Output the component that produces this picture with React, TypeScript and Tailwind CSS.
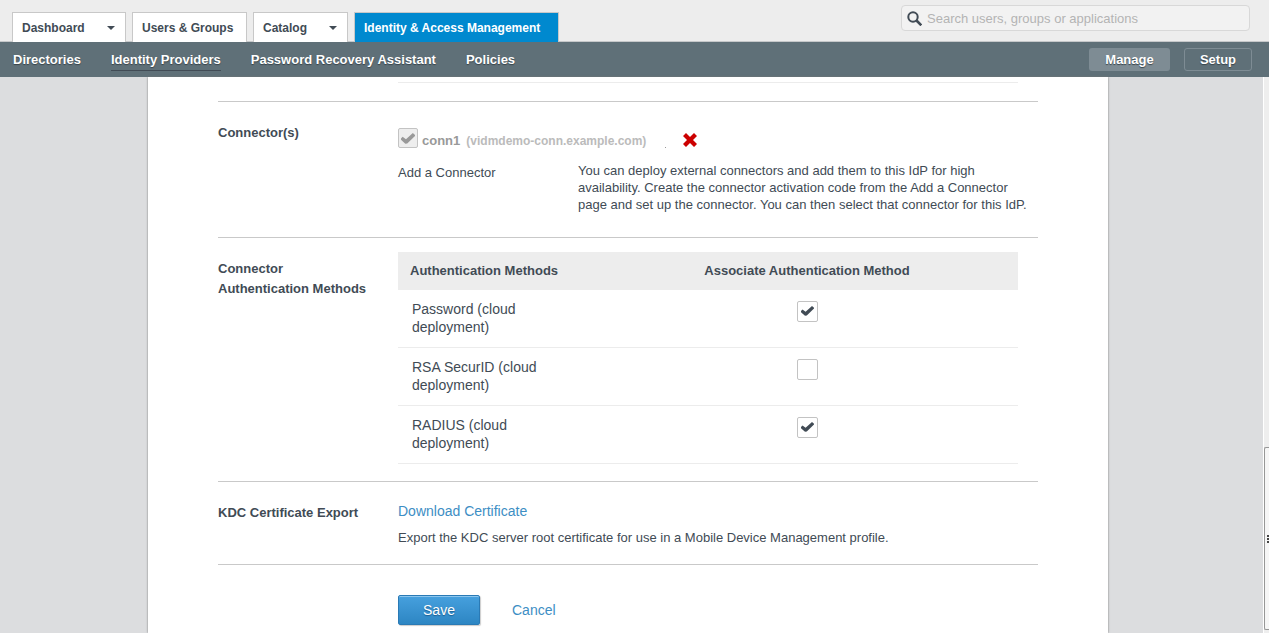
import React from "react";

type Tab = { label: string; menu?: boolean; active?: boolean; width: string };

const tabs: Tab[] = [
  { label: "Dashboard", menu: true, width: "w-[114px]" },
  { label: "Users & Groups", width: "w-[115px]" },
  { label: "Catalog", menu: true, width: "w-[95px]" },
  { label: "Identity & Access Management", active: true, width: "w-[205px]" },
];

const methods = [
  { id: "password", label: "Password (cloud deployment)", checked: true },
  { id: "securid", label: "RSA SecurID (cloud deployment)", checked: false },
  { id: "radius", label: "RADIUS (cloud deployment)", checked: true },
];

function CheckBox({ id, checked, disabled }: { id: string; checked: boolean; disabled?: boolean }) {
  return (
    <span className={`relative inline-block align-top ${disabled ? "size-5" : "size-[21px]"}`}>
      <input
        id={id}
        type="checkbox"
        defaultChecked={checked}
        disabled={disabled}
        className="peer block size-full appearance-none rounded-[2px] border border-[#c3c3c3] bg-white disabled:bg-[#eeeeee]"
      />
      <svg
        viewBox="0 0 13 10"
        className={
          disabled
            ? "pointer-events-none absolute top-[5px] left-[3px] hidden h-[11px] w-[14px] text-[#999999] peer-checked:block"
            : "pointer-events-none absolute top-[5px] left-1 hidden h-[10px] w-[13px] text-[#414b55] peer-checked:block"
        }
      >
        <path d="M0 5 1.5 3.4 4.6 5.7 11 0 13 1.7 13 2.6 5.8 9.6 4 9.8 0 6.2Z" fill="currentColor" />
      </svg>
    </span>
  );
}

function Section({ title, children }: { title: string; children: React.ReactNode }) {
  return (
    <section className="flex border-t border-[#c9c9c9]">
      <h2 className="w-[180px] shrink-0 pt-[21px] pr-7 text-[13px] leading-5 font-bold">{title}</h2>
      <div className="min-w-0 flex-1 pr-5">{children}</div>
    </section>
  );
}

function TopBar() {
  return (
    <header className="flex h-[42px] items-end justify-between border-b border-[#c6c8ca] bg-[#ededed] pr-[19px] pl-3">
      <nav className="-mb-px flex gap-1.5" aria-label="Main">
        {tabs.map((tab) => (
          <a
            key={tab.label}
            href="#"
            className={`flex h-[30px] items-center justify-between border border-b-0 border-[#c8c8c8] pr-[10px] pl-[9px] text-[12px] font-bold whitespace-nowrap ${tab.width} ${
              tab.active ? "bg-[#0089cf] text-white" : "bg-white text-[#414b55]"
            }`}
          >
            {tab.label}
            {tab.menu && (
              <svg viewBox="0 0 8 4" className="h-1 w-2">
                <path d="M0 0h8L4 4Z" fill="currentColor" />
              </svg>
            )}
          </a>
        ))}
      </nav>
      <div className="relative mb-[10px] w-[349px]">
        <svg viewBox="0 0 15 15" className="absolute top-[6px] left-[6px] size-[15px] text-[#414b55]">
          <circle cx="6" cy="6" r="4.7" fill="none" stroke="currentColor" strokeWidth="2" />
          <path d="m9.5 9.5 4.8 4.8" stroke="currentColor" strokeWidth="2.6" />
        </svg>
        <input
          type="text"
          aria-label="Search"
          placeholder="Search users, groups or applications"
          className="block h-[26px] w-full rounded-[4px] border border-[#d8d8d8] bg-[#f2f2f2] pr-2 pl-[25px] text-[13px] text-[#414b55] placeholder:text-[#b4b4b4]"
        />
      </div>
    </header>
  );
}

function SubNav() {
  return (
    <div className="flex h-[35px] items-center justify-between bg-[#5f7078] pr-[17px] pl-[13px] text-[13px] font-bold text-white [text-shadow:0_1px_1px_#37434a]">
      <nav className="flex gap-[30px]" aria-label="Identity and access">
        <a href="#" className="h-[23px] leading-[23px]">Directories</a>
        <a href="#" className="h-[23px] border-b border-[#414b55] leading-[23px]">Identity Providers</a>
        <a href="#" className="h-[23px] leading-[23px]">Password Recovery Assistant</a>
        <a href="#" className="h-[23px] leading-[23px]">Policies</a>
      </nav>
      <div className="flex gap-[14px]">
        <button className="h-[23px] w-[81px] rounded-[3px] bg-[#7e8c94] [text-shadow:inherit]">Manage</button>
        <button className="h-[23px] w-[68px] rounded-[3px] border border-[#7e8c94] [text-shadow:inherit]">Setup</button>
      </div>
    </div>
  );
}

function MethodsTable() {
  return (
    <table className="mt-[14px] mb-[17px] w-full table-fixed text-left">
      <thead>
        <tr className="h-[38px] bg-[#ededed] text-[13px]">
          <th className="w-[198px] pl-3 font-bold whitespace-nowrap">Authentication Methods</th>
          <th className="text-center font-bold">Associate Authentication Method</th>
        </tr>
      </thead>
      <tbody>
        {methods.map((m) => (
          <tr key={m.id} className="border-b border-[#ececec] align-top">
            <td className="pt-[10px] pr-[40px] pb-[11px] pl-3.5 text-[14px] leading-[18px]">
              <label htmlFor={m.id} className="block">{m.label}</label>
            </td>
            <td className="pt-[11px] text-center">
              <CheckBox id={m.id} checked={m.checked} />
            </td>
          </tr>
        ))}
      </tbody>
    </table>
  );
}

export default function App() {
  return (
    <div className="flex min-h-screen flex-col bg-[#dcdddf] font-['Liberation_Sans',Arial,sans-serif] text-[13px] text-[#414b55]">
      <TopBar />
      <SubNav />
      <div className="flex flex-1">
        <main className="flex flex-1 justify-center pr-[7px]">
          <div className="w-full max-w-[960px] bg-white px-[70px] pb-2 shadow-[0_0_2px_#777777]">
            <div className="mt-[5px] mr-5 mb-[18px] ml-[180px] border-t border-[#ececec]" />
            <Section title="Connector(s)">
              <div className="mt-[26px] flex h-5 items-center gap-1 font-bold">
                <CheckBox id="conn1" checked disabled />
                <label htmlFor="conn1" className="flex gap-1.5 pt-1.5 leading-5 text-[#999999]">
                  conn1 <span className="text-[12px] text-[#bbbbbb]">(vidmdemo-conn.example.com)</span>
                </label>
                <span className="ml-[15px] size-px self-end bg-[#999999]" />
                <button aria-label="Remove connector" className="ml-[13px] pt-1">
                  <svg viewBox="0 0 14 14" className="block size-3.5">
                    <path d="M3 0 7 4 11 0 14 3 10 7 14 11 11 14 7 10 3 14 0 11 4 7 0 3Z" fill="#cc0000" />
                  </svg>
                </button>
              </div>
              <div className="mt-[14px] mb-6 flex">
                <a href="#" className="w-[180px] shrink-0 leading-[21px]">Add a Connector</a>
                <p className="-mr-5 leading-[17px]">
                  You can deploy external connectors and add them to this IdP for high<br />
                  availability. Create the connector activation code from the Add a Connector<br />
                  page and set up the connector. You can then select that connector for this IdP.
                </p>
              </div>
            </Section>
            <Section title="Connector Authentication Methods">
              <MethodsTable />
            </Section>
            <Section title="KDC Certificate Export">
              <a href="#" className="mt-[19px] block text-[14px] leading-5 text-[#3d8ec4]">Download Certificate</a>
              <p className="mt-[7px] mb-4 leading-5">
                Export the KDC server root certificate for use in a Mobile Device Management profile.
              </p>
            </Section>
            <div className="flex items-center gap-8 border-t border-[#c9c9c9] pt-[30px] pl-[180px] text-[14px]">
              <button className="h-[30px] w-[82px] rounded-[2px] border border-[#2a7ab5] bg-linear-to-b from-[#46a0de] to-[#2d86c3] text-white shadow-[inset_0_1px_0_#8cc6ee,1px_1px_1px_#cccccc] [text-shadow:0_1px_1px_#1c5f92]">
                Save
              </button>
              <a href="#" className="text-[#3d8ec4]">Cancel</a>
            </div>
          </div>
        </main>
        <div className="flex w-[6px] flex-col justify-end border-l border-white bg-[#eeeeee] pb-[3px]" aria-hidden="true">
          <div className="flex h-[183px] flex-col items-end justify-center gap-px rounded-l-[2px] border border-r-0 border-[#979797] bg-[#f6f6f6]">
            <span className="h-[2px] w-[2px] bg-[#444444]" />
            <span className="h-[2px] w-[2px] bg-[#444444]" />
            <span className="h-[2px] w-[2px] bg-[#444444]" />
          </div>
        </div>
      </div>
    </div>
  );
}
